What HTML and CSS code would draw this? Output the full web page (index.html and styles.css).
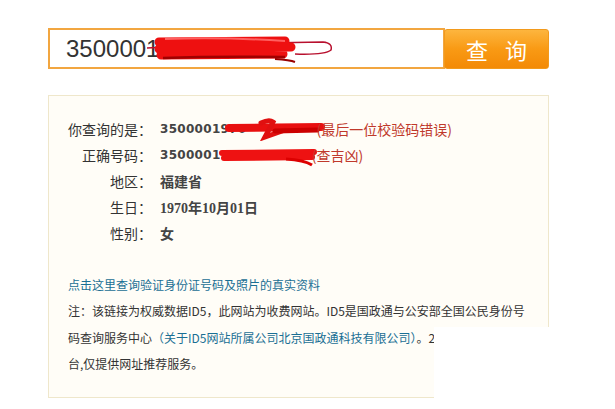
FILE: index.html
```html
<html>
  <head>
    <meta charset="utf-8">
    <link rel="stylesheet" href="styles.css">
  </head>
  <body>
    <div class="search">
      <div class="search_box">
        <span class="search_text">3500001</span>
        <svg class="scribble_big" viewBox="0 0 190 30">
          <path d="M2 15 L40 13 L120 10 L178 9 Q188 10 186 17 Q180 22 150 21" fill="none" stroke="#b8102e" stroke-width="1.5"/>
          <path d="M14 9 L140 8 M14 16 L146 14 M16 22 L138 21" fill="none" stroke="#ee1010" stroke-width="9" stroke-linecap="round"/>
          <path d="M20 6 Q80 4 140 8" fill="none" stroke="#ff6060" stroke-width="2"/>
          <path d="M18 25 Q70 23 140 24" fill="none" stroke="#a00000" stroke-width="2.5"/>
          <path d="M130 26 Q145 27 150 29" fill="none" stroke="#900" stroke-width="2"/>
        </svg>
      </div>
      <button class="search_btn">查&nbsp;询</button>
    </div>

    <div class="panel">
      <div class="row">
        <span class="label">你查询的是：</span>
        <span class="value num">3500001970</span>
        <svg class="scribble" viewBox="0 0 100 24">
          <path d="M4 11 L96 10" fill="none" stroke="#e81010" stroke-width="8" stroke-linecap="round"/>
          <path d="M36 6 Q44 2 48 5 L40 20 L60 13" fill="none" stroke="#e01010" stroke-width="5" stroke-linecap="round"/>
          <path d="M50 14 L92 13" fill="none" stroke="#c00" stroke-width="5" stroke-linecap="round"/>
        </svg>
        <span class="warn">(最后一位校验码错误)</span>
      </div>
      <div class="row">
        <span class="label">正确号码：</span>
        <span class="value num">350000197</span>
        <svg class="scribble scribble_b" viewBox="0 0 104 24">
          <path d="M6 10 L98 9 M8 15 L96 14" fill="none" stroke="#ee1212" stroke-width="6" stroke-linecap="round"/>
          <path d="M70 16 Q88 17 96 22" fill="none" stroke="#d00" stroke-width="3"/>
        </svg>
        <span class="warn">(查吉凶)</span>
      </div>
      <div class="row">
        <span class="label">地区：</span>
        <span class="value">福建省</span>
      </div>
      <div class="row">
        <span class="label">生日：</span>
        <span class="value">1970年10月01日</span>
      </div>
      <div class="row">
        <span class="label">性别：</span>
        <span class="value">女</span>
      </div>

      <p class="link_line"><a href="#">点击这里查询验证身份证号码及照片的真实资料</a></p>
      <div class="note">
        <div>注：该链接为权威数据ID5，此网站为收费网站。ID5是国政通与公安部全国公民身份号</div>
        <div>码查询服务中心<a href="#">（关于ID5网站所属公司北京国政通科技有限公司）</a>。2</div>
        <div>台,仅提供网址推荐服务。</div>
      </div>
    </div>
    <div class="cutout"></div>
  </body>
</html>
```

FILE: styles.css
```css
body {
    margin: 0;
    background: #fff;
    font-family: "Noto Sans CJK SC", sans-serif;
    color: #333;
}
.search {
    display: flex;
    margin: 28px 0 0 48px;
    width: 502px;
    height: 41px;
}
.search_box {
    width: 397px;
    flex-shrink: 0;
    border: 2px solid #f2a640;
    display: flex;
    align-items: center;
    padding-left: 16px;
    box-sizing: border-box;
    overflow: hidden;
}
.search_text {
    font-family: "Liberation Sans", sans-serif;
    font-size: 24px;
    color: #333;
}
.scribble_big {
    display: block;
    width: 190px;
    height: 30px;
    flex-shrink: 0;
    margin-left: -14px;
    margin-top: -2px;
}
.search_btn {
    width: 105px;
    height: 40px;
    flex-shrink: 0;
    margin: 1px 0 0 -1px;
    border: 1px solid #f29a1c;
    border-radius: 3px;
    background: linear-gradient(#fdb53e, #f99a14 50%, #f38a06);
    color: #fff;
    font-family: "Noto Sans CJK SC", sans-serif;
    font-size: 22px;
    letter-spacing: 6px;
    padding: 0 0 0 6px;
}
.panel {
    width: 501px;
    height: 303px;
    margin: 26px 0 0 48px;
    border: 1px solid #efe7cb;
    background: #fffdf7;
    padding: 20px 0 0 19px;
    box-sizing: border-box;
}
.row {
    display: flex;
    align-items: center;
    height: 26px;
    font-size: 14px;
    white-space: nowrap;
}
.label {
    width: 84px;
    text-align: right;
    color: #333;
}
.value {
    margin-left: 8px;
    font-family: "Liberation Serif", "Noto Sans CJK SC", serif;
    font-weight: bold;
    font-size: 14px;
    color: #444;
}
.num {
    font-family: "DejaVu Sans", sans-serif;
    font-size: 12px;
    letter-spacing: 0.3px;
}
.scribble {
    display: block;
    width: 100px;
    height: 24px;
    flex-shrink: 0;
    margin-left: -22px;
    margin-right: -8px;
}
.scribble_b {
    width: 104px;
}
.warn {
    color: #c0392b;
    font-size: 14px;
}
.link_line {
    margin: 26px 0 0;
    font-size: 12px;
    line-height: 26px;
}
a {
    color: #1a6f94;
    text-decoration: none;
}
.note {
    font-size: 12px;
    line-height: 26.5px;
    color: #333;
    white-space: nowrap;
}
.cutout {
    position: absolute;
    left: 434px;
    top: 327px;
    right: 0;
    bottom: 0;
    background: #fff;
}
```
